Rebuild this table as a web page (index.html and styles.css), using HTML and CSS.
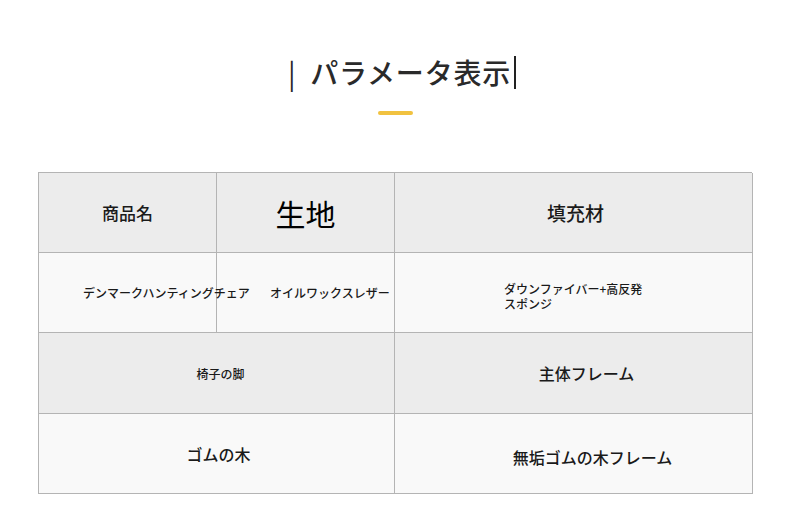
FILE: index.html
```html
<!DOCTYPE html>
<html lang="ja">
<head>
<meta charset="utf-8">
<link rel="stylesheet" href="styles.css">
</head>
<body>
<div class="page">
  <header class="head">
    <h1 class="title"><span class="bar-l">|</span>パラメータ表示<span class="bar-r"></span></h1>
    <div class="accent"></div>
  </header>
  <div class="table">
    <div class="cell hd c1"><span class="t17">商品名</span></div>
    <div class="cell hd c2"><span class="t30">生地</span></div>
    <div class="cell hd c3"><span class="t19 shift2">填充材</span></div>

    <div class="cell lt left c1"><span class="t12 p45">デンマークハンティングチェア</span></div>
    <div class="cell lt left c2"><span class="t12 p54">オイルワックスレザー</span></div>
    <div class="cell lt left c3"><span class="t12 p110 two">ダウンファイバー+高反発<br>スポンジ</span></div>

    <div class="cell hd span2"><span class="t12 shift4">椅子の脚</span></div>
    <div class="cell hd c3"><span class="t16 shift13">主体フレーム</span></div>

    <div class="cell lt span2"><span class="t16 shift2">ゴムの木</span></div>
    <div class="cell lt c3"><span class="t16 shift19 low">無垢ゴムの木フレーム</span></div>
  </div>
</div>
</body>
</html>
```

FILE: styles.css
```css
* { box-sizing: border-box; }
html, body { margin: 0; padding: 0; background: #ffffff; }
body {
  font-family: "Noto Sans CJK JP", "Noto Sans", sans-serif;
  color: #222;
  width: 790px;
  height: 525px;
  overflow: hidden;
}
.page { padding-top: 52px; }
.head {
  display: flex;
  flex-direction: column;
  align-items: center;
}
.title {
  margin: 0;
  font-size: 28px;
  line-height: 40px;
  font-weight: 500;
  color: #2a2a2a;
  display: flex;
  align-items: center;
  padding-left: 14px;
  letter-spacing: 0.8px;
}
.bar-l { margin-right: 14px; font-weight: 400; }
.bar-r {
  display: inline-block;
  width: 2px;
  height: 33px;
  background: #222;
  margin-left: 3px;
}
.accent {
  margin-top: 19px;
  width: 35px;
  height: 4px;
  border-radius: 2px;
  background: #f1c240;
}
.table {
  margin: 57px 0 0 38px;
  width: 714px;
  display: grid;
  grid-template-columns: 178px 178px 358px;
  grid-template-rows: 80px 80px 81px 80px;
  border-top: 1px solid #b4b4b4;
  border-left: 1px solid #b4b4b4;
}
.cell {
  border-right: 1px solid #b4b4b4;
  border-bottom: 1px solid #b4b4b4;
  display: flex;
  align-items: center;
  justify-content: center;
  white-space: nowrap;
  color: #1a1a1a;
  font-weight: 500;
}
.hd { background: #ececec; }
.lt { background: #f9f9f9; }
.left { justify-content: flex-start; }
.span2 { grid-column: 1 / 3; }
.t12 { font-size: 12px; line-height: 15px; }
.t16 { font-size: 16px; line-height: 22px; }
.t17 { font-size: 17px; line-height: 24px; }
.t19 { font-size: 19px; line-height: 26px; }
.t30 { font-size: 30px; line-height: 40px; font-weight: 400; color: #000; }
.p45 { padding-left: 44px; position: relative; z-index: 1; }
.p54 { padding-left: 53px; }
.p110 { padding-left: 109px; }
.two { margin-top: 6px; }
.shift4 { margin-left: 8px; }
.shift2 { margin-left: 4px; }
.shift13 { margin-left: 26px; }
.shift19 { margin-left: 38px; }
.low { margin-top: 6px; }
.c1 { overflow: visible; }
```
